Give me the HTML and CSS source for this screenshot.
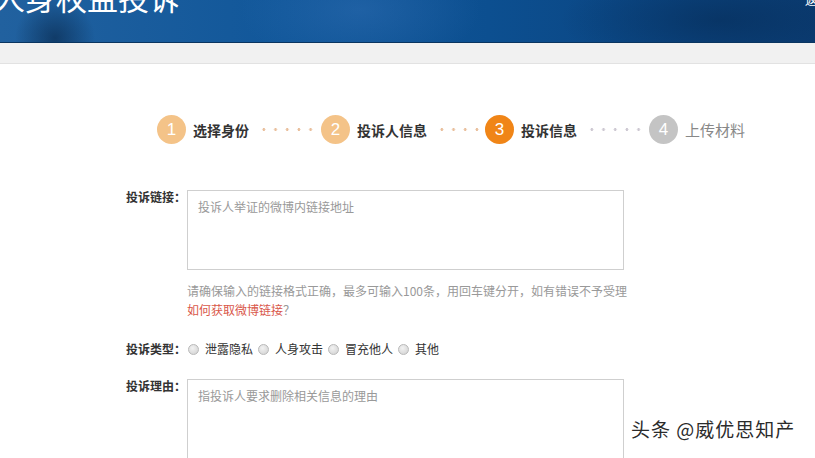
FILE: index.html
```html
<!DOCTYPE html>
<html>
<head>
  <title>人身权益投诉</title>
  <meta charset="utf-8" />
  <meta name="viewport" content="width=device-width, initial-scale=1.0" />
  <link rel="stylesheet" href="styles.css">
</head>
<body>
  <div class="banner">
    <h1 class="banner-title">人身权益投诉</h1>
    <a class="banner-link">返回</a>
  </div>
  <div class="subbar"></div>

  <div class="main">
    <ol class="steps">
      <li class="step done"><span class="num">1</span><span class="name">选择身份</span><span class="dots"></span></li>
      <li class="step done"><span class="num">2</span><span class="name">投诉人信息</span><span class="dots"></span></li>
      <li class="step current"><span class="num">3</span><span class="name">投诉信息</span><span class="dots grey"></span></li>
      <li class="step todo"><span class="num">4</span><span class="name">上传材料</span></li>
    </ol>

    <form class="complaint">
      <div class="row">
        <label class="row-label">投诉链接：</label>
        <div class="row-field">
          <textarea class="box" placeholder="投诉人举证的微博内链接地址"></textarea>
          <p class="hint first">请确保输入的链接格式正确，最多可输入100条，用回车键分开，如有错误不予受理</p>
          <p class="hint"><a class="help">如何获取微博链接</a>？</p>
        </div>
      </div>

      <div class="row radios">
        <label class="row-label">投诉类型：</label>
        <div class="row-field options">
          <label class="opt"><input type="radio" name="kind" /> 泄露隐私</label>
          <label class="opt"><input type="radio" name="kind" /> 人身攻击</label>
          <label class="opt"><input type="radio" name="kind" /> 冒充他人</label>
          <label class="opt"><input type="radio" name="kind" /> 其他</label>
        </div>
      </div>

      <div class="row">
        <label class="row-label">投诉理由：</label>
        <div class="row-field">
          <textarea class="box" placeholder="指投诉人要求删除相关信息的理由"></textarea>
        </div>
      </div>
    </form>
  </div>

  <div class="watermark">头条 @威优思知产</div>
</body>
</html>
```

FILE: styles.css
```css
* {
  box-sizing: border-box;
}
body {
  margin: 0;
  font-family: "Noto Sans CJK SC", "Liberation Sans", sans-serif;
  font-size: 12px;
  color: #333;
  background-color: #fff;
  overflow: hidden;
}

/* top banner */
.banner {
  height: 43px;
  display: flex;
  justify-content: space-between;
  align-items: flex-start;
  overflow: hidden;
  background:
    radial-gradient(ellipse 40px 40px at 55px 38px, rgba(5, 30, 60, 0.55), transparent),
    radial-gradient(ellipse 120px 60px at 360px 10px, rgba(60, 120, 190, 0.35), transparent),
    radial-gradient(ellipse 160px 50px at 720px 20px, rgba(5, 40, 80, 0.5), transparent),
    linear-gradient(90deg, #21619f 0%, #11579a 35%, #0c4f90 60%, #0b4683 80%, #0b3d74 100%);
  border-bottom: 1px solid #0a3560;
}
.banner-title {
  margin: -19px 0 0 -6px;
  font-size: 31px;
  line-height: 31px;
  font-weight: normal;
  color: #fff;
}
.banner-link {
  margin: -7px -14px 0 0;
  font-size: 12px;
  line-height: 14px;
  color: #fff;
}
.subbar {
  height: 21px;
  background-color: #f1f1f1;
  border-bottom: 1px solid #e2e2e2;
}

/* steps */
.steps {
  list-style: none;
  margin: 51px 0 0 157px;
  padding: 0;
  display: flex;
}
.step {
  width: 164px;
  height: 29px;
  display: flex;
  align-items: center;
}
.step:last-child {
  width: auto;
}
.num {
  width: 29px;
  height: 29px;
  border-radius: 50%;
  flex: none;
  display: flex;
  align-items: center;
  justify-content: center;
  color: #fff;
  font-family: "Liberation Sans", sans-serif;
  font-size: 17px;
  background-color: #f4c388;
}
.name {
  margin-left: 7px;
  font-size: 14px;
  font-weight: bold;
  color: #333;
  white-space: nowrap;
}
.dots {
  flex: 1;
  height: 3px;
  margin: 0 6px 0 9px;
  background-image: radial-gradient(circle, #e9bf9c 1.2px, transparent 1.7px);
  background-size: 11.7px 3px;
  background-position: left center;
}
.dots.grey {
  background-image: radial-gradient(circle, #cdc8d2 1.2px, transparent 1.7px);
}
.current .num {
  background-color: #f08517;
}
.todo .num {
  background-color: #c4c4c4;
}
.todo .name {
  font-weight: normal;
  font-size: 15px;
  color: #888;
}

/* form */
.complaint {
  margin: 46px 0 0 126px;
}
.row {
  display: grid;
  grid-template-columns: 61px 437px;
  margin-bottom: 20px;
}
.row-label {
  font-weight: bold;
  line-height: 13px;
  white-space: nowrap;
}
.box {
  display: block;
  width: 437px;
  height: 80px;
  margin: 0;
  padding: 9px 10px;
  border: 1px solid #cfcfcf;
  resize: none;
  font-family: inherit;
  font-size: 12px;
  line-height: 14px;
  color: #333;
}
.box::placeholder {
  color: #999;
}
.hint {
  margin: 0;
  line-height: 19px;
  color: #999;
  white-space: nowrap;
}
.hint.first {
  margin-top: 11px;
}
.help {
  color: #d9574a;
}

.radios {
  align-items: center;
}
.radios .row-label {
  line-height: 20px;
}
.options {
  display: flex;
  align-items: center;
  line-height: 20px;
  color: #333;
}
.opt {
  display: flex;
  align-items: center;
  margin-right: 4px;
}
.opt input {
  appearance: none;
  width: 11px;
  height: 11px;
  margin: 0 6px 0 1px;
  border-radius: 50%;
  border: 1px solid #b9b9b9;
  background: radial-gradient(circle at 40% 35%, #f2f2f2, #cfcfcf);
}

/* watermark over the page */
.watermark {
  position: absolute;
  left: 631px;
  top: 418px;
  font-size: 19px;
  line-height: 22px;
  letter-spacing: 1px;
  color: #2b2b2b;
  text-shadow: 0 0 2px #fff;
}
```
